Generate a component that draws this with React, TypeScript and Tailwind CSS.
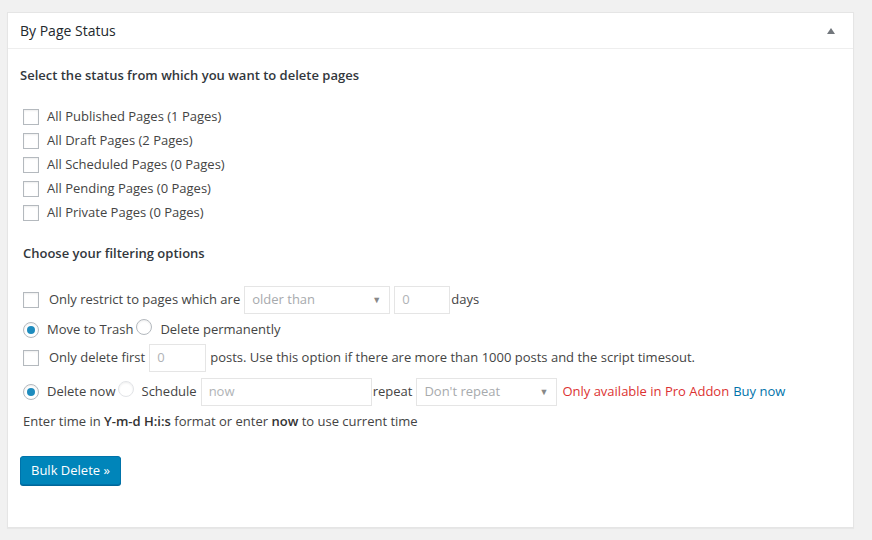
const statuses = [
  "All Published Pages (1 Pages)",
  "All Draft Pages (2 Pages)",
  "All Scheduled Pages (0 Pages)",
  "All Pending Pages (0 Pages)",
  "All Private Pages (0 Pages)",
];

const Checkbox = () => (
  <span className="inline-block w-4 h-4 shrink-0 bg-white border border-[#b4b9be] shadow-[inset_0_1px_2px_rgba(0,0,0,0.07)]" />
);

const Radio = ({ checked, faded }: { checked?: boolean; faded?: boolean }) => (
  <span
    className={`inline-flex items-center justify-center w-4 h-4 shrink-0 rounded-full bg-white border shadow-[inset_0_1px_2px_rgba(0,0,0,0.07)] ${
      faded ? "border-[#e2e4e7]" : "border-[#b4b9be]"
    }`}
  >
    {checked && <span className="w-2 h-2 rounded-full bg-[#1e8cbe]" />}
  </span>
);

const Select = ({ label, width }: { label: string; width: string }) => (
  <span
    className={`inline-flex items-center justify-between h-[28px] px-[7px] border border-[#e5e5e5] bg-white text-[#a7aaad] ${width}`}
  >
    <span>{label}</span>
    <span className="text-[9px] text-[#888] mr-[1px]">▼</span>
  </span>
);

const Input = ({ value, width }: { value: string; width: string }) => (
  <span
    className={`inline-flex items-center h-[28px] px-[7px] border border-[#e5e5e5] bg-white text-[#b0b3b6] ${width}`}
  >
    {value}
  </span>
);

export default function App() {
  return (
    <div
      className="w-[872px] h-[540px] bg-[#f1f1f1] pt-[12px] pl-[7px] text-[13px] text-[#444]"
      style={{ fontFamily: '"Open Sans", "Liberation Sans", sans-serif' }}
    >
      <div className="w-[847px] h-[516px] bg-white border border-[#e5e5e5] shadow-[0_1px_1px_rgba(0,0,0,0.04)]">
        {/* header */}
        <div className="flex items-center justify-between h-[36px] px-[12px] border-b border-[#eee]">
          <h2 className="text-[14px] font-normal text-[#23282d]">By Page Status</h2>
          <span className="w-0 h-0 mr-[6px] border-l-[4px] border-r-[4px] border-b-[6px] border-l-transparent border-r-transparent border-b-[#72777c]" />
        </div>

        <div className="px-[12px]">
          <p className="mt-[16px] h-[20px] leading-[20px] font-semibold text-[#32373c]">
            Select the status from which you want to delete pages
          </p>

          <div className="mt-[20px] pl-[3px]">
            {statuses.map((s) => (
              <label key={s} className="flex items-center gap-[8px] h-[24px]">
                <Checkbox />
                <span>{s}</span>
              </label>
            ))}
          </div>

          <p className="mt-[18px] pl-[3px] h-[20px] leading-[20px] font-semibold text-[#32373c]">
            Choose your filtering options
          </p>

          <div className="pl-[3px]">
            <div className="flex items-center h-[28px] mt-[23px]">
              <Checkbox />
              <span className="ml-[10px] mr-[4px]">Only restrict to pages which are</span>
              <Select label="older than" width="w-[146px]" />
              <span className="ml-[4px]">
                <Input value="0" width="w-[56px]" />
              </span>
              <span className="ml-[1px]">days</span>
            </div>

            <div className="flex items-center h-[20px] mt-[6px]">
              <Radio checked />
              <span className="ml-[8px]">Move to Trash</span>
              <span className="ml-[3px]">
                <Radio />
              </span>
              <span className="ml-[8px]">Delete permanently</span>
            </div>

            <div className="flex items-center h-[28px] mt-[4px]">
              <Checkbox />
              <span className="ml-[10px] mr-[4px]">Only delete first</span>
              <Input value="0" width="w-[57px]" />
              <span className="ml-[4px]">
                posts. Use this option if there are more than 1000 posts and the script timesout.
              </span>
            </div>

            <div className="flex items-center h-[28px] mt-[6px]">
              <Radio checked />
              <span className="ml-[8px]">Delete now</span>
              <span className="ml-[2px]">
                <Radio faded />
              </span>
              <span className="ml-[8px] mr-[4px]">Schedule</span>
              <Input value="now" width="w-[171px]" />
              <span className="ml-[1px] mr-[4px]">repeat</span>
              <Select label="Don't repeat" width="w-[141px]" />
              <span className="ml-[5px] text-[#dc3232]">Only available in Pro Addon</span>
              <a className="ml-[4px] text-[#0073aa]">Buy now</a>
            </div>

            <p className="h-[20px] leading-[20px] mt-[5px]">
              Enter time in <b className="font-semibold text-[#333]">Y-m-d H:i:s</b> format or enter{" "}
              <b className="font-semibold text-[#333]">now</b> to use current time
            </p>
          </div>

          <button className="mt-[25px] h-[29px] px-[10px] rounded-[3px] bg-[#0085ba] border border-[#0073aa] text-white text-[13px] shadow-[0_1px_0_#006799]">
            Bulk Delete »
          </button>
        </div>
      </div>
    </div>
  );
}
